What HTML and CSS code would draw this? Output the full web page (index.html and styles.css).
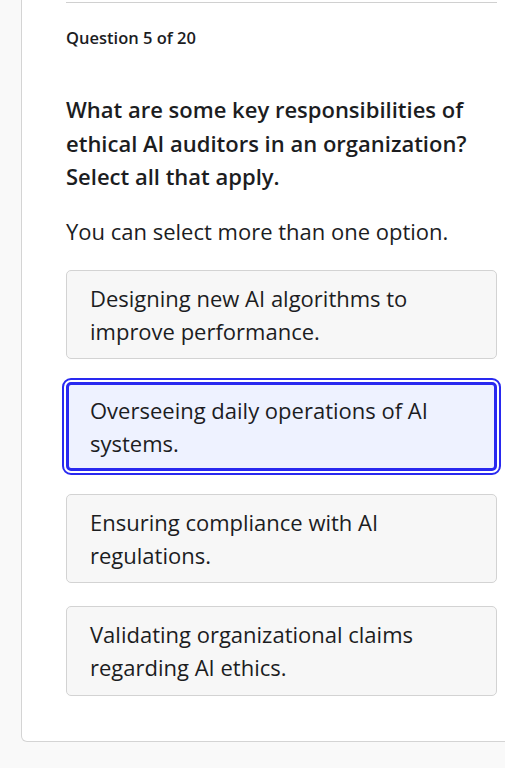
FILE: index.html
```html
<!DOCTYPE html>
<html lang="en">
<head>
<meta charset="utf-8">
<title>Question 5 of 20</title>
<link rel="stylesheet" href="styles.css">
</head>
<body>
<main class="card">
  <hr class="divider">
  <p class="counter">Question 5 of 20</p>
  <h1 class="question">What are some key responsibilities of ethical AI auditors in an organization? Select all that apply.</h1>
  <p class="hint">You can select more than one option.</p>
  <div class="options" role="group">
    <button class="option">Designing new AI algorithms to improve performance.</button>
    <button class="option option--selected" aria-pressed="true">Overseeing daily operations of AI systems.</button>
    <button class="option">Ensuring compliance with AI regulations.</button>
    <button class="option">Validating organizational claims regarding AI ethics.</button>
  </div>
</main>
</body>
</html>
```
FILE: styles.css
```css
html {
  overflow: hidden;
}
body {
  margin: 0;
  background: #f9f9f9;
  font-family: "Open Sans", "Liberation Sans", sans-serif;
  color: #1c1d1f;
}
.card {
  box-sizing: border-box;
  width: 521px;
  margin-left: 21px;
  padding: 2px 44px 45px 44px;
  background: #ffffff;
  border: 1px solid #d4d4d4;
  border-top: 0;
  border-radius: 0 0 6px 6px;
}
.divider {
  margin: 0;
  border: 0;
  height: 1px;
  background: #d0d0d0;
}
.counter {
  margin: 23px 0 0 0;
  font-size: 16.5px;
  line-height: 24px;
  font-weight: 600;
}
.question {
  margin: 43px 0 0 0;
  font-size: 22px;
  line-height: 33.5px;
  font-weight: 600;
}
.hint {
  margin: 21px 0 0 0;
  font-size: 22px;
  line-height: 32px;
}
.options {
  margin-top: 23px;
  display: flex;
  flex-direction: column;
  gap: 22.7px;
}
.option {
  display: block;
  width: 100%;
  box-sizing: border-box;
  text-align: left;
  font-family: inherit;
  color: inherit;
  font-size: 22px;
  line-height: 33px;
  padding: 11px 23px 10.5px 23px;
  background: #f7f7f7;
  border: 1px solid #d3d3d3;
  border-radius: 5px;
  cursor: pointer;
}
.option--selected {
  background: #eef2ff;
  border: 3px solid #2929f0;
  padding: 9px 21px 8.5px 21px;
  outline: 2px solid #2929f0;
  outline-offset: 2px;
}
```
